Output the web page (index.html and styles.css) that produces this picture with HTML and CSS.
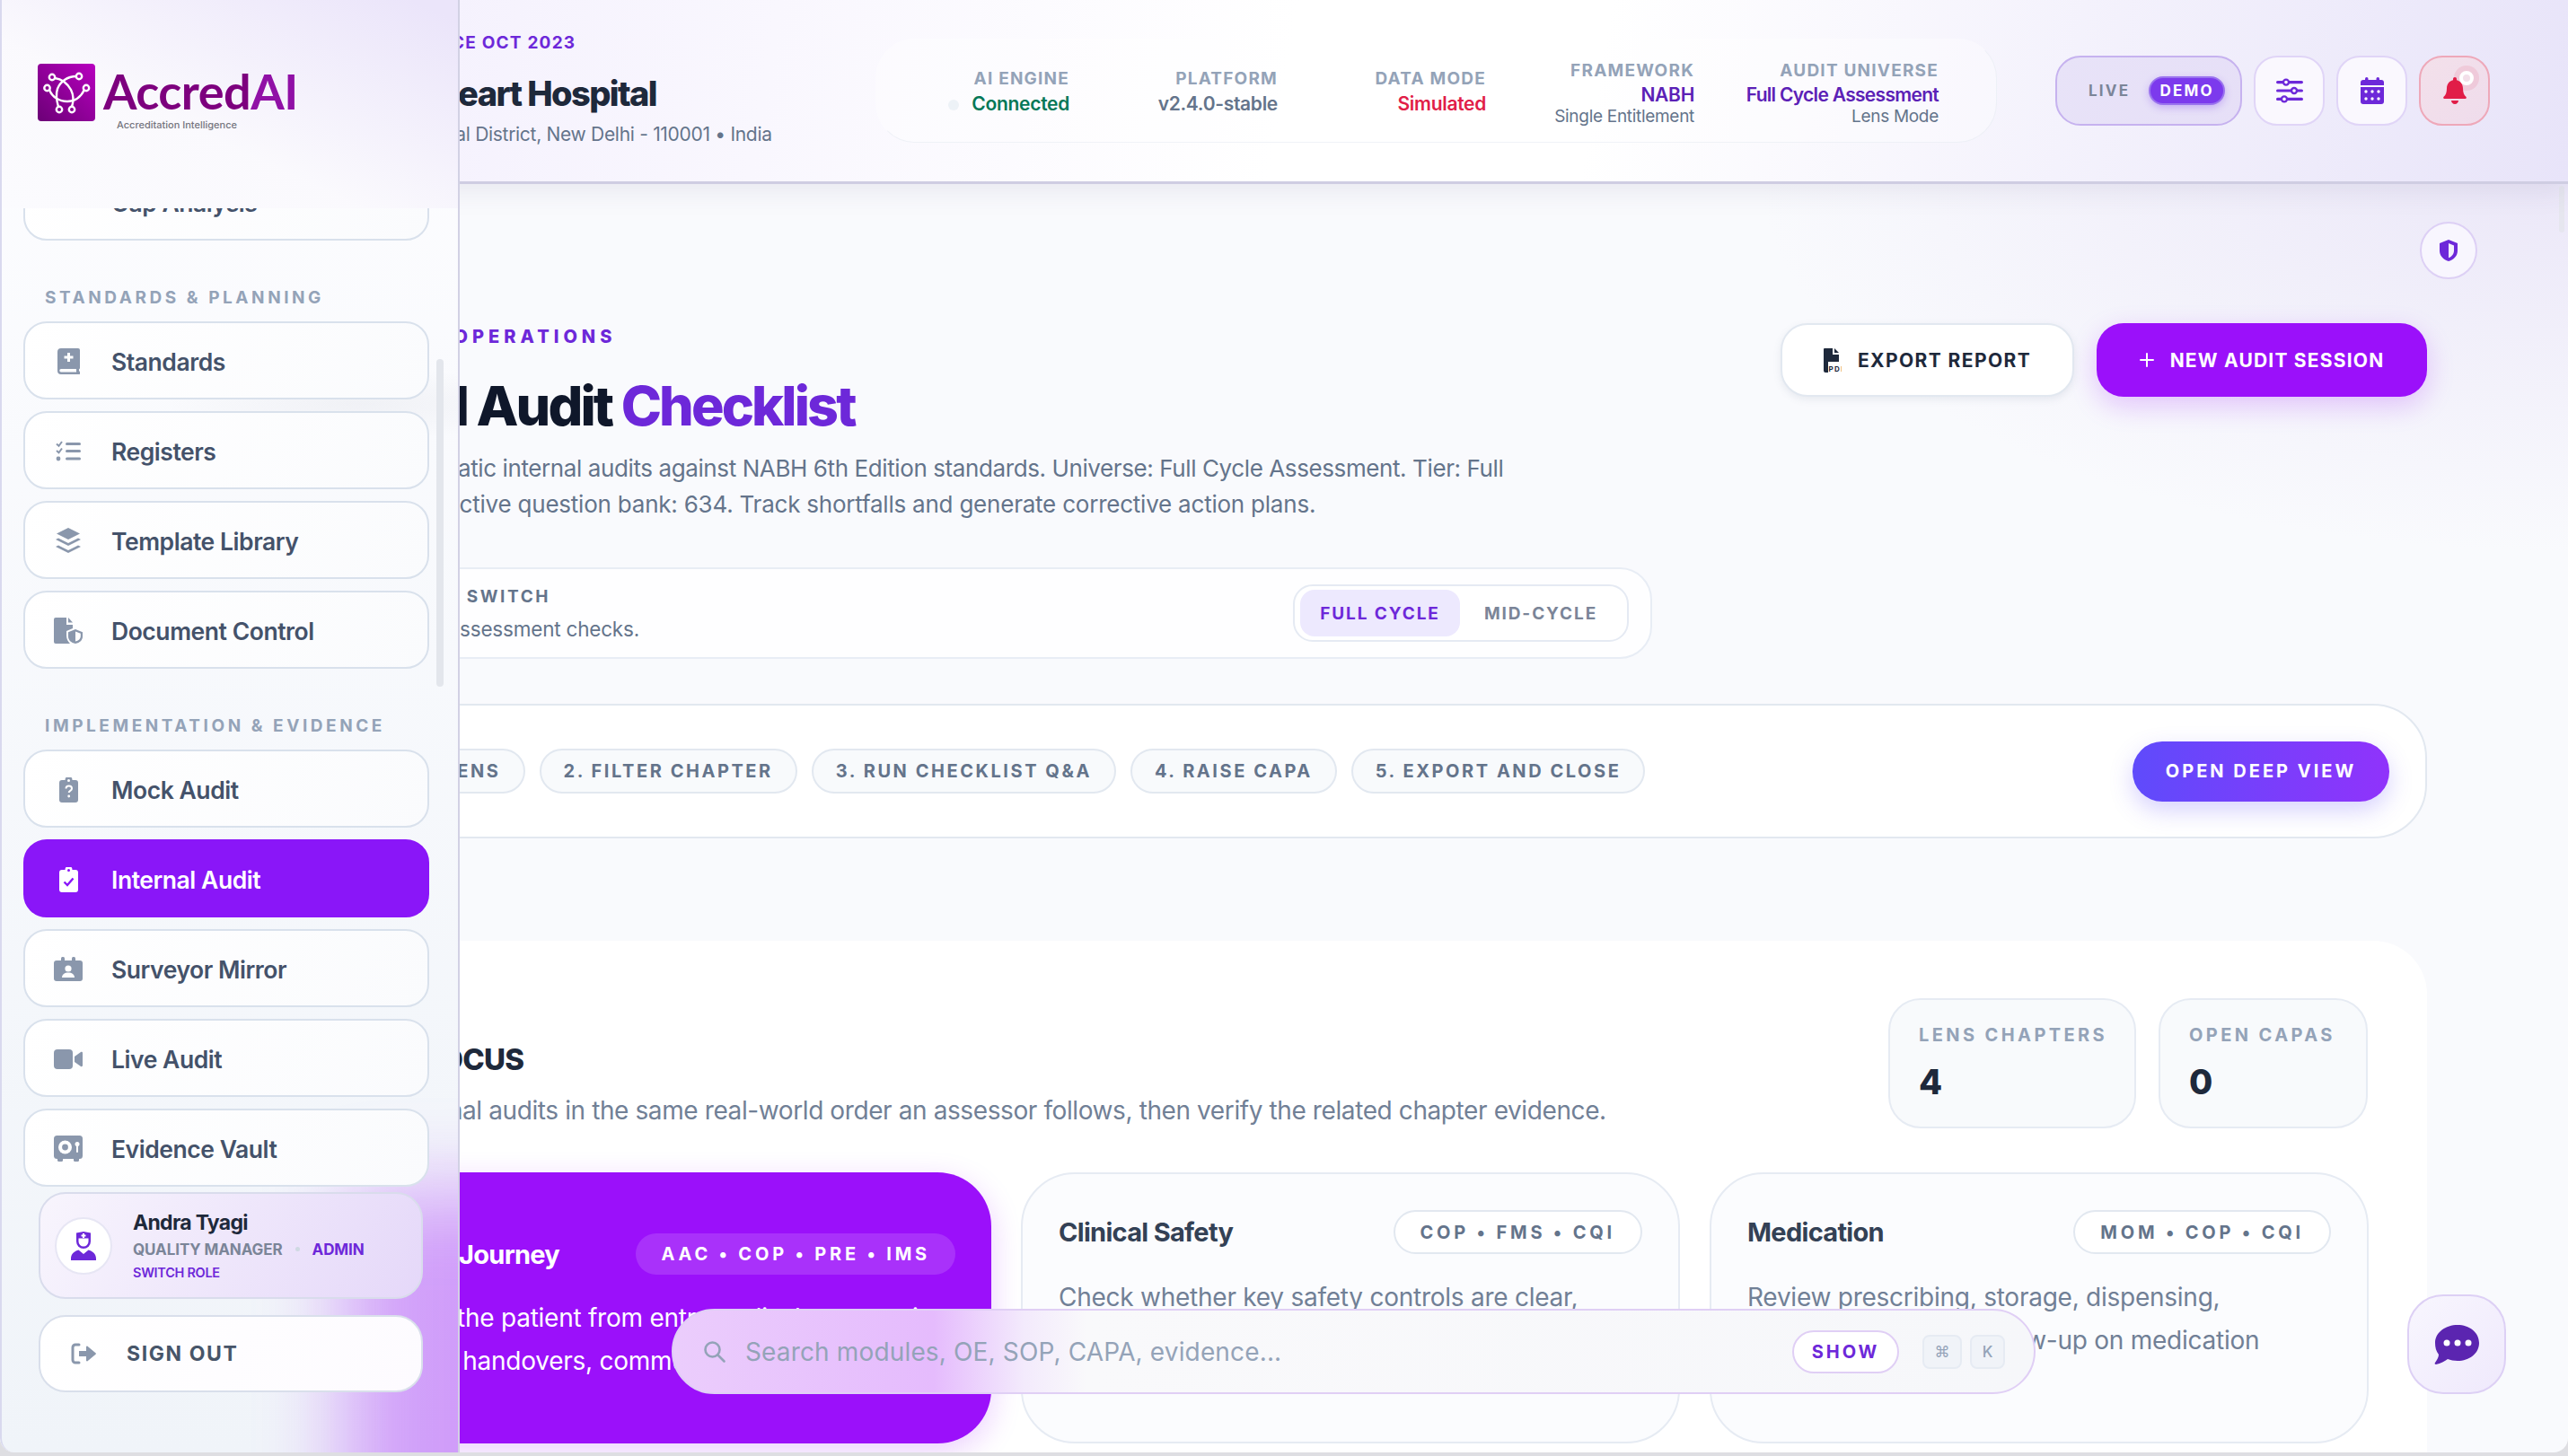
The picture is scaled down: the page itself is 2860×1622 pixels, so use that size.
FILE: index.html
```html
<!DOCTYPE html>
<html lang="en">
<head>
    <meta charset="UTF-8">
    <meta name="viewport" content="width=device-width, initial-scale=1.0">
    <title>AccredAI - Internal Audit Checklist</title>
    <link rel="stylesheet" href="styles.css">
</head>
<body>
<div class="app">

    <!-- main column, runs underneath the floating sidebar -->
    <main class="main">
        <header class="topbar">
            <div class="org">
                <div class="org-tag">ACCREDITED SINCE OCT 2023</div>
                <div class="org-name">City Heart Hospital</div>
                <div class="org-addr">Central District, New Delhi - 110001 &bull; India</div>
            </div>
            <div class="status-pill">
                <div class="stat stat-first">
                    <div class="stat-label">AI ENGINE</div>
                    <div class="stat-value green"><span class="dot"></span>Connected</div>
                </div>
                <div class="stat">
                    <div class="stat-label">PLATFORM</div>
                    <div class="stat-value">v2.4.0-stable</div>
                </div>
                <div class="stat">
                    <div class="stat-label">DATA MODE</div>
                    <div class="stat-value red">Simulated</div>
                </div>
                <div class="stat stat-three">
                    <div class="stat-label">FRAMEWORK</div>
                    <div class="stat-value violet">NABH</div>
                    <div class="stat-sub">Single Entitlement</div>
                </div>
                <div class="stat stat-three stat-wide">
                    <div class="stat-label">AUDIT UNIVERSE</div>
                    <div class="stat-value violet">Full Cycle Assessment</div>
                    <div class="stat-sub">Lens Mode</div>
                </div>
            </div>
            <div class="live-toggle">
                <span class="live-text">LIVE</span>
                <span class="demo-pill">DEMO</span>
            </div>
            <button class="icon-btn" type="button" aria-label="Filters">
                <svg width="30" height="28" viewBox="0 0 30 28" fill="#6d28d9"><rect x="0" y="3" width="30" height="3.2" rx="1.6"/><rect x="0" y="12.400" width="30" height="3.2" rx="1.6"/><rect x="0" y="21.800" width="30" height="3.2" rx="1.6"/><circle cx="11" cy="4.600" r="4.200"/><circle cx="20" cy="14" r="4.200"/><circle cx="9" cy="23.400" r="4.200"/><circle cx="11" cy="4.600" r="1.800" fill="#fff"/><circle cx="20" cy="14" r="1.800" fill="#fff"/><circle cx="9" cy="23.400" r="1.800" fill="#fff"/></svg>
            </button>
            <button class="icon-btn" type="button" aria-label="Calendar">
                <svg width="26" height="30" viewBox="0 0 26 30" fill="#6d28d9"><rect x="5" y="0" width="3.500" height="6" rx="1.700"/><rect x="17.500" y="0" width="3.500" height="6" rx="1.700"/><path d="M3 3h20a3 3 0 0 1 3 3v3H0V6a3 3 0 0 1 3-3z"/><path d="M0 11h26v16a3 3 0 0 1-3 3H3a3 3 0 0 1-3-3z"/><g fill="#fff"><circle cx="6" cy="16" r="1.700"/><circle cx="13" cy="16" r="1.700"/><circle cx="20" cy="16" r="1.700"/><circle cx="6" cy="24" r="1.700"/><circle cx="13" cy="24" r="1.700"/><circle cx="20" cy="24" r="1.700"/></g></svg>
            </button>
            <button class="icon-btn icon-btn-alert" type="button" aria-label="Notifications">
                <svg width="26" height="30" viewBox="0 0 26 30" fill="#e11d48"><path d="M13 0c1.200 0 2 .9 2 2v1.300c4.300.9 7 4.600 7 9.200 0 4.500 1.200 7.500 3.400 9.300.8.700.4 2.200-.8 2.200H1.400c-1.200 0-1.600-1.500-.8-2.200C2.800 20 4 17 4 12.500c0-4.600 2.700-8.300 7-9.200V2c0-1.100.8-2 2-2z"/><path d="M9 26h8c0 2.300-1.800 4-4 4s-4-1.700-4-4z"/></svg>
                <span class="bell-dot"></span>
            </button>
        </header>

        <div class="content">
            <button class="shield-btn" type="button" aria-label="Security">
                <svg width="20" height="24" viewBox="0 0 20 24"><path d="M10 0l10 4v8c0 6-4 10-10 12C4 22 0 18 0 12V4z" fill="#6d28d9"/><path d="M10 4l6 2.400V12c0 4-2.300 6.800-6 8.300z" fill="#f3effd"/></svg>
            </button>

            <section class="title-row">
                <div>
                    <div class="eyebrow">AUDIT OPERATIONS</div>
                    <h1 class="page-title">Internal Audit <span class="accent">Checklist</span></h1>
                    <p class="page-desc">Run systematic internal audits against NABH 6th Edition standards. Universe: Full Cycle Assessment. Tier: Full<br><span class="desc-second">Assurance. Active question bank: 634. Track shortfalls and generate corrective action plans.</span></p>
                </div>
                <div class="title-actions">
                    <button class="btn btn-light" type="button">
                        <svg width="20" height="27" viewBox="0 0 20 27"><path d="M1 0h9v7h7v8H5v12H2a2 2 0 0 1-2-2V1a1 1 0 0 1 1-1z" fill="#1e293b"/><path d="M12 0l5 5h-5z" fill="#1e293b"/><text x="5.500" y="26" font-size="8" font-weight="700" fill="#1e293b" font-family="Inter, sans-serif">PDF</text></svg>
                        EXPORT REPORT
                    </button>
                    <button class="btn btn-primary" type="button">
                        <svg width="16" height="16" viewBox="0 0 16 16" stroke="#fff" stroke-width="2" stroke-linecap="round"><path d="M8 1v14M1 8h14"/></svg>
                        NEW AUDIT SESSION
                    </button>
                </div>
            </section>

            <section class="switch-card">
                <div>
                    <div class="switch-title">AUDIT MODE SWITCH</div>
                    <div class="switch-sub">Choose depth of assessment checks.</div>
                </div>
                <div class="segment">
                    <span class="segment-item active">FULL CYCLE</span>
                    <span class="segment-item">MID-CYCLE</span>
                </div>
            </section>

            <section class="steps-card">
                <div class="steps">
                    <span class="chip">1. SELECT LENS</span>
                    <span class="chip">2. FILTER CHAPTER</span>
                    <span class="chip">3. RUN CHECKLIST Q&amp;A</span>
                    <span class="chip">4. RAISE CAPA</span>
                    <span class="chip">5. EXPORT AND CLOSE</span>
                </div>
                <button class="btn-deep" type="button">OPEN DEEP VIEW</button>
            </section>

            <section class="focus-card">
                <div class="focus-head">
                    <div>
                        <h2 class="focus-title">LENS FOCUS</h2>
                        <p class="focus-sub">Run internal audits in the same real-world order an assessor follows, then verify the related chapter evidence.</p>
                    </div>
                    <div class="focus-stats">
                        <div class="mini-stat mini-stat-wide">
                            <div class="mini-label">LENS CHAPTERS</div>
                            <div class="mini-value">4</div>
                        </div>
                        <div class="mini-stat">
                            <div class="mini-label">OPEN CAPAS</div>
                            <div class="mini-value">0</div>
                        </div>
                    </div>
                </div>
                <div class="lens-grid">
                    <article class="lens lens-active">
                        <div class="lens-top">
                            <h3>Patient Journey</h3>
                            <span class="lens-tag">AAC &bull; COP &bull; PRE &bull; IMS</span>
                        </div>
                        <p>Follow the patient from entry to discharge, review<br>clinical handovers, communication and consent.</p>
                    </article>
                    <article class="lens">
                        <div class="lens-top">
                            <h3>Clinical Safety</h3>
                            <span class="lens-tag">COP &bull; FMS &bull; CQI</span>
                        </div>
                        <p>Check whether key safety controls are clear,<br>monitored and followed at the point of care</p>
                    </article>
                    <article class="lens">
                        <div class="lens-top">
                            <h3>Medication</h3>
                            <span class="lens-tag">MOM &bull; COP &bull; CQI</span>
                        </div>
                        <p>Review prescribing, storage, dispensing,<br>administration, and follow-up on medication</p>
                    </article>
                </div>
            </section>
        </div>
        <div class="page-scroll"></div>
    </main>

    <!-- sidebar floats over the page -->
    <aside class="sidebar">
        <div class="brand">
            <svg class="brand-mark" width="64" height="64" viewBox="0 0 64 64">
                <defs><linearGradient id="markFill" x1="1" y1="0" x2="0" y2="1"><stop offset="0" stop-color="#b800bf"/><stop offset="1" stop-color="#6b0076"/></linearGradient></defs>
                <rect width="64" height="64" rx="4" fill="url(#markFill)"/>
                <g fill="none" stroke="#fff" stroke-width="2.400">
                    <path d="M19 16c8 1 14 6 18 13 3 6 3 13 1 19"/>
                    <path d="M43 14c-10 0-18 6-21 14-2 6-1 13 1 20"/>
                    <path d="M13 29c3 8 11 13 20 13 9 0 15-5 19-13"/>
                    <circle cx="16" cy="15" r="3.200"/><circle cx="46" cy="14" r="3.200"/><circle cx="10.500" cy="27" r="3.200"/><circle cx="54" cy="27" r="3.200"/><circle cx="24" cy="51" r="3.200"/><circle cx="38" cy="51" r="3.200"/>
                </g>
            </svg>
            <div class="brand-text">
                <div class="brand-name">Accred<span class="brand-ai">AI</span></div>
                <div class="brand-tag">Accreditation Intelligence</div>
            </div>
        </div>

        <nav class="side-nav">
            <a class="nav-item nav-first"><span class="nav-icon"><svg width="28" height="28" viewBox="0 0 28 28" fill="currentColor"><rect x="0" y="4" width="28" height="3" rx="1"/></svg></span>Gap Analysis</a>

            <div class="nav-label">STANDARDS &amp; PLANNING</div>
            <a class="nav-item"><span class="nav-icon"><svg width="25" height="29" viewBox="0 0 25 29" fill="currentColor" fill-rule="evenodd"><path d="M0 4a4 4 0 0 1 4-4h19a2 2 0 0 1 2 2v20a1.500 1.500 0 0 1-1 1.400v2.100a1.500 1.500 0 0 1 0 3.500H4a4 4 0 0 1-4-4zM11 5v3.500H7.500v3H11V15h3v-3.500h3.500v-3H14V5zM4 23a1.700 1.700 0 0 0 0 3.400h17V23z"/></svg></span>Standards</a>
            <a class="nav-item"><span class="nav-icon"><svg width="28" height="23" viewBox="0 0 28 23" fill="currentColor"><path d="M1 3.500l2.500 2.300L7 1M1 11l2.500 2.300L7 8.500" fill="none" stroke="currentColor" stroke-width="2"/><circle cx="3" cy="20" r="2.400"/><rect x="11" y="2" width="17" height="3" rx="1.500"/><rect x="11" y="10" width="17" height="3" rx="1.500"/><rect x="11" y="18.500" width="17" height="3" rx="1.500"/></svg></span>Registers</a>
            <a class="nav-item"><span class="nav-icon"><svg width="28" height="29" viewBox="0 0 28 29" fill="currentColor"><path d="M14 0l13 6.500-13 6.500L1 6.500z"/><path d="M0 13l3-1.500 11 5.500 11-5.500 3 1.500-14 7z"/><path d="M0 21l3-1.500 11 5.500 11-5.500 3 1.500-14 7z"/></svg></span>Template Library</a>
            <a class="nav-item"><span class="nav-icon"><svg width="32" height="29" viewBox="0 0 32 29" fill="currentColor"><path d="M0 2a2 2 0 0 1 2-2h12v8h7v4l-7 3v5c0 3.500 1.500 6.500 4 9H2a2 2 0 0 1-2-2z"/><path d="M16 0l5 5.500h-5z"/><path d="M24 13l8 3.200V21c0 4-3 7-8 8-5-1-8-4-8-8v-4.800z"/><path d="M24 15.500v11c3.500-1 5.800-3 5.800-5.600v-3.200z" fill="#fff"/></svg></span>Document Control</a>

            <div class="nav-label">IMPLEMENTATION &amp; EVIDENCE</div>
            <a class="nav-item"><span class="nav-icon"><svg width="21" height="28" viewBox="0 0 21 28"><path d="M3 3h3.500a4 4 0 0 1 8 0H18a3 3 0 0 1 3 3v19a3 3 0 0 1-3 3H3a3 3 0 0 1-3-3V6a3 3 0 0 1 3-3z" fill="currentColor"/><path d="M7.500 12.500c0-4 6.500-4 6.500 0 0 2.500-3.300 2.300-3.300 4.500" fill="none" stroke="#fff" stroke-width="2"/><circle cx="10.700" cy="21" r="1.400" fill="#fff"/><circle cx="10.500" cy="3.500" r="1.500" fill="#fff"/></svg></span>Mock Audit</a>
            <a class="nav-item active"><span class="nav-icon"><svg width="21" height="28" viewBox="0 0 21 28"><path d="M3 3h3.500a4 4 0 0 1 8 0H18a3 3 0 0 1 3 3v19a3 3 0 0 1-3 3H3a3 3 0 0 1-3-3V6a3 3 0 0 1 3-3z" fill="currentColor"/><path d="M5.500 16.500l3.500 3.500 6.500-7.500" fill="none" stroke="#8a16f8" stroke-width="2.400"/><circle cx="10.500" cy="3.500" r="1.500" fill="#8a16f8"/></svg></span>Internal Audit</a>
            <a class="nav-item"><span class="nav-icon"><svg width="32" height="27" viewBox="0 0 32 27" fill="currentColor"><rect x="0" y="4" width="32" height="23" rx="3"/><rect x="8" y="0" width="4" height="8" rx="1.500"/><rect x="20" y="0" width="4" height="8" rx="1.500"/><circle cx="16" cy="13" r="3.600" fill="#fff"/><path d="M9 23c0-3.500 3-5.500 7-5.500s7 2 7 5.500z" fill="#fff"/></svg></span>Surveyor Mirror</a>
            <a class="nav-item"><span class="nav-icon"><svg width="32" height="24" viewBox="0 0 32 24" fill="currentColor"><rect x="0" y="1" width="21" height="22" rx="4"/><path d="M23 9l7-5c.8-.5 2 0 2 1v14c0 1-1.200 1.500-2 1l-7-5z"/></svg></span>Live Audit</a>
            <a class="nav-item"><span class="nav-icon"><svg width="32" height="29" viewBox="0 0 32 29" fill="currentColor"><rect x="0" y="0" width="32" height="26" rx="3.500"/><rect x="4" y="24" width="6" height="5" rx="1.500"/><rect x="22" y="24" width="6" height="5" rx="1.500"/><circle cx="12.500" cy="13" r="7.500" fill="#fff"/><circle cx="12.500" cy="13" r="3.400"/><circle cx="26" cy="9.500" r="2.500" fill="#fff"/><rect x="25" y="10" width="2" height="9" rx="1" fill="#fff"/></svg></span>Evidence Vault</a>
        </nav>
        <div class="side-scroll"></div>

        <div class="side-foot">
            <div class="user-card">
                <div class="avatar">
                    <svg width="28" height="32" viewBox="0 0 28 32"><path d="M6 1.500L14 0l8 1.500V11a8 8 0 0 1-16 0z" fill="#6d28d9"/><path d="M8.500 7.500h11V11a5.500 5.500 0 0 1-11 0z" fill="#fff"/><path d="M13 2h2v1.500h1.500v2H15V7h-2V5.500h-1.500v-2H13z" fill="#fff"/><path d="M0 32v-2c0-5 4-8.500 8.500-9.500l5.500 4.500 5.500-4.500c4.500 1 8.500 4.500 8.500 9.500v2z" fill="#6d28d9"/></svg>
                </div>
                <div>
                    <div class="user-name">Andra Tyagi</div>
                    <div class="user-role">QUALITY MANAGER<span class="role-dot"></span><span class="role-admin">ADMIN</span></div>
                    <div class="user-switch">SWITCH ROLE</div>
                </div>
            </div>
            <button class="sign-out" type="button">
                <svg width="28" height="24" viewBox="0 0 28 24" fill="#8a97ac"><path d="M9 2H5a3 3 0 0 0-3 3v14a3 3 0 0 0 3 3h4" fill="none" stroke="#8a97ac" stroke-width="3" stroke-linecap="round"/><path d="M9 9h8V4.500c0-.8.900-1.200 1.500-.7l9 7.400c.5.400.5 1.200 0 1.600l-9 7.400c-.6.500-1.500.1-1.500-.7V15H9z"/></svg>
                SIGN OUT
            </button>
        </div>
    </aside>

    <!-- floating overlays -->
    <div class="search-bar">
        <svg width="26" height="26" viewBox="0 0 26 26" fill="none" stroke="#94a3b8" stroke-width="2.600" stroke-linecap="round"><circle cx="10.500" cy="10.500" r="8"/><path d="M16.500 16.500l7 7"/></svg>
        <span class="search-text">Search modules, OE, SOP, CAPA, evidence...</span>
        <button class="show-btn" type="button">SHOW</button>
        <span class="key key-cmd">&#8984;</span>
        <span class="key">K</span>
    </div>
    <button class="chat-btn" type="button" aria-label="Chat">
        <svg width="50" height="44" viewBox="0 0 50 44"><path d="M26 0c13 0 24 8 24 20S39 40 26 40c-4 0-8-1-11-2-3 2-8 5-13 6-1 0-2-1-1-2 2-3 4-6 4-9C2 29 1 25 1 20 1 8 13 0 26 0z" fill="#5b25b0"/><circle cx="14" cy="20" r="3.500" fill="#fff"/><circle cx="26" cy="20" r="3.500" fill="#fff"/><circle cx="38" cy="20" r="3.500" fill="#fff"/></svg>
    </button>
</div>
</body>
</html>
```

FILE: styles.css
```css
/* page frame */
html, body {
    height: 100%;
    margin: 0;
    overflow: hidden;
    background: #dedee2;
    font-family: Inter, "Noto Sans", sans-serif;
}
* {
    box-sizing: border-box;
}
button {
    font-family: inherit;
    cursor: pointer;
}
h1, h2, h3, p {
    margin: 0;
}
.app {
    position: relative;
    height: calc(100vh - 4px);
    overflow: hidden;
    border-radius: 0 0 16px 16px;
}

/* main column */
.main {
    height: 100%;
    display: flex;
    flex-direction: column;
    background: radial-gradient(900px 420px at 100% 12%, #ebe7f8, rgba(235, 231, 248, 0) 100%), #f9fafd;
}
.topbar {
    flex: none;
    height: 205px;
    display: flex;
    align-items: center;
    padding-right: 87px;
    background: linear-gradient(100deg, #f3effd 10%, #fff 50%, #fff 62%, #e8e4f9 100%);
    border-bottom: 3px solid #cfcde2;
    box-shadow: 0 6px 30px rgba(70, 60, 110, 0.1);
    position: relative;
    z-index: 1;
}
.org {
    align-self: flex-start;
    padding: 34px 0 0 304px;
    white-space: nowrap;
}
.org-tag {
    margin-left: 23px;
    font-size: 19px;
    line-height: 28px;
    font-weight: 700;
    letter-spacing: 1.2px;
    color: #6d28d9;
}
.org-name {
    margin-top: 17px;
    margin-left: 101px;
    font-size: 38px;
    line-height: 50px;
    font-weight: 800;
    letter-spacing: -1.6px;
    color: #1e293b;
}
.org-addr {
    margin-top: 6px;
    margin-left: 150px;
    font-size: 21px;
    line-height: 30px;
    letter-spacing: -0.3px;
    color: #64748b;
}
.status-pill {
    width: 1249px;
    height: 116px;
    margin-left: auto;
    margin-right: 65px;
    flex: none;
    display: flex;
    align-items: center;
    padding-left: 15px;
    border-radius: 44px;
    border: 1px solid rgba(226, 232, 240, 0.5);
    border-left-color: transparent;
    border-top-color: transparent;
    background: rgba(255, 255, 255, 0.35);
}
.stat {
    width: 232px;
    flex: none;
    padding-top: 3px;
    text-align: right;
    white-space: nowrap;
}
.stat-first {
    width: 200px;
}
.stat-wide {
    width: 272px;
}
.stat-three {
    padding-top: 6px;
}
.stat-label {
    font-size: 19px;
    line-height: 24px;
    font-weight: 700;
    letter-spacing: 1.2px;
    color: #94a3b8;
}
.stat-value {
    margin-top: 3px;
    font-size: 21px;
    line-height: 26px;
    font-weight: 600;
    letter-spacing: -0.3px;
    color: #64748b;
}
.stat-three .stat-value {
    margin-top: 2px;
}
.stat-sub {
    font-size: 19px;
    line-height: 22px;
    letter-spacing: -0.3px;
    color: #64748b;
}
.stat-wide .stat-value {
    letter-spacing: -0.7px;
}
.green { color: #047857; }
.red { color: #e11d48; }
.violet { color: #5b21b6; }
.dot {
    display: inline-block;
    width: 12px;
    height: 12px;
    margin-right: 14px;
    border-radius: 50%;
    background: #edf2f7;
}
.live-toggle {
    flex: none;
    width: 208px;
    height: 78px;
    display: flex;
    align-items: center;
    gap: 21px;
    padding-left: 35px;
    border-radius: 28px;
    border: 2px solid #c6b2ef;
    background: linear-gradient(120deg, #e8e3f8, #e6dff7);
}
.live-text {
    font-size: 17px;
    font-weight: 700;
    letter-spacing: 2.2px;
    color: #7b8598;
}
.demo-pill {
    width: 85px;
    height: 32px;
    display: flex;
    align-items: center;
    justify-content: center;
    border-radius: 16px;
    border: 2px solid #9a73ee;
    background: #7c3aed;
    box-shadow: 0 3px 8px rgba(124, 58, 237, 0.3);
    font-size: 17px;
    font-weight: 700;
    letter-spacing: 2.2px;
    color: #fff;
}
.icon-btn {
    position: relative;
    flex: none;
    width: 79px;
    height: 78px;
    margin-left: 13px;
    padding: 0;
    display: flex;
    align-items: center;
    justify-content: center;
    border-radius: 26px;
    border: 2px solid #e0d5f7;
    background: #faf8fe;
}
.icon-btn-alert {
    border-color: #eea8b9;
    background: linear-gradient(135deg, #f3e0ea, #efdcec);
}
.bell-dot {
    position: absolute;
    top: 15px;
    right: 16px;
    width: 16px;
    height: 16px;
    border-radius: 50%;
    background: #f3dfe9;
    border: 4px solid #fff;
    box-shadow: 0 0 0 6px rgba(225, 29, 72, 0.1);
}

/* scrolling content */
.content {
    position: relative;
    flex: 1;
    min-height: 0;
    overflow: hidden;
    padding: 155px 157px 0 304px;
}
.shield-btn {
    position: absolute;
    top: 42px;
    right: 101px;
    width: 64px;
    height: 64px;
    padding: 0;
    display: flex;
    align-items: center;
    justify-content: center;
    border-radius: 50%;
    border: 2px solid #ddd0f5;
    background: #f8f6fe;
}
.title-row {
    display: flex;
    justify-content: space-between;
    align-items: flex-start;
}
.title-actions {
    display: flex;
    gap: 25px;
}
.eyebrow {
    margin-left: 104px;
    font-size: 20px;
    line-height: 30px;
    font-weight: 800;
    letter-spacing: 5px;
    color: #6d28d9;
}
.page-title {
    margin-top: 24px;
    margin-left: 6px;
    font-size: 61px;
    line-height: 76px;
    font-weight: 800;
    letter-spacing: -2.9px;
    color: #0f172a;
}
.accent {
    color: #6d28d9;
}
.page-desc {
    margin-top: 12px;
    margin-left: 67px;
    font-size: 26px;
    line-height: 40px;
    letter-spacing: -0.4px;
    color: #64748b;
    white-space: nowrap;
}
.desc-second {
    margin-left: -20px;
    letter-spacing: -0.22px;
}
.btn {
    height: 82px;
    display: flex;
    align-items: center;
    justify-content: center;
    border-radius: 30px;
    font-size: 21px;
    font-weight: 700;
    letter-spacing: 1.4px;
    white-space: nowrap;
}
.btn-light {
    width: 327px;
    gap: 18px;
    border: 2px solid #e2e8f0;
    background: #fff;
    color: #1e293b;
    box-shadow: 0 3px 8px rgba(100, 116, 139, 0.12);
}
.btn-primary {
    width: 368px;
    gap: 18px;
    border: none;
    background: #9b10fa;
    color: #fff;
    letter-spacing: 1.2px;
    box-shadow: 0 10px 30px rgba(155, 16, 250, 0.22);
}
.switch-card {
    width: 1536px;
    height: 102px;
    margin-top: 50px;
    display: flex;
    align-items: center;
    justify-content: space-between;
    padding: 0 24px 0 13px;
    border-radius: 36px;
    border: 2px solid #e8edf5;
    background: #fefeff;
}
.switch-title {
    margin-left: 46px;
    font-size: 19px;
    line-height: 26px;
    font-weight: 700;
    letter-spacing: 2.6px;
    color: #64748b;
}
.switch-sub {
    margin-top: 10px;
    font-size: 22.5px;
    line-height: 26px;
    letter-spacing: -0.2px;
    color: #64748b;
    white-space: nowrap;
}
.segment {
    width: 374px;
    height: 64px;
    display: flex;
    align-items: center;
    padding: 0 6px;
    border-radius: 22px;
    border: 2px solid #e5eaf3;
    background: #fff;
}
.segment-item {
    flex: 1;
    height: 52px;
    display: flex;
    align-items: center;
    justify-content: center;
    border-radius: 16px;
    font-size: 19px;
    font-weight: 700;
    letter-spacing: 1.9px;
    color: #7b8598;
    white-space: nowrap;
}
.segment-item.active {
    flex: 0 0 178px;
    background: #ede9fe;
    color: #6d28d9;
}
.steps-card {
    height: 150px;
    margin-top: 50px;
    display: flex;
    align-items: center;
    justify-content: space-between;
    padding: 0 40px 0 36px;
    border-radius: 60px;
    border: 2px solid #e2e8f0;
    background: #fff;
}
.steps {
    display: flex;
    gap: 16px;
}
.chip {
    height: 50px;
    display: flex;
    align-items: center;
    padding: 0 25px;
    border-radius: 25px;
    border: 2px solid #e2e8f0;
    background: #f8fafc;
    font-size: 20px;
    font-weight: 700;
    letter-spacing: 2.55px;
    color: #64748b;
    white-space: nowrap;
}
.btn-deep {
    width: 286px;
    height: 67px;
    border: none;
    border-radius: 33px;
    background: linear-gradient(90deg, #5f4bfb, #9033fb);
    box-shadow: 0 10px 26px rgba(95, 75, 251, 0.25);
    font-size: 20px;
    font-weight: 700;
    letter-spacing: 3px;
    color: #fff;
}
.focus-card {
    height: 640px;
    margin-top: 114px;
    padding: 64px 66px 0 66px;
    border-radius: 60px;
    background: #fff;
}
.focus-head {
    display: flex;
    justify-content: space-between;
    align-items: flex-end;
    white-space: nowrap;
}
.focus-title {
    margin-left: 13px;
    padding-top: 2px;
    font-size: 33px;
    line-height: 40px;
    font-weight: 800;
    letter-spacing: -0.8px;
    color: #1e293b;
}
.focus-sub {
    margin-top: 17px;
    margin-left: 14px;
    font-size: 28px;
    line-height: 40px;
    letter-spacing: -0.4px;
    color: #718096;
}
.focus-stats {
    display: flex;
    gap: 25px;
}
.mini-stat {
    width: 233px;
    height: 145px;
    padding: 26px 32px;
    border-radius: 36px;
    border: 2px solid #e6ebf3;
    background: #f8fafc;
}
.mini-stat-wide {
    width: 276px;
}
.mini-label {
    font-size: 20px;
    line-height: 26px;
    font-weight: 700;
    letter-spacing: 3.4px;
    color: #94a3b8;
    white-space: nowrap;
}
.mini-value {
    margin-top: 15px;
    font-size: 38px;
    line-height: 48px;
    font-weight: 800;
    color: #1e293b;
}
.lens-grid {
    margin-top: 49px;
    display: grid;
    grid-template-columns: repeat(3, 734px);
    column-gap: 33px;
}
.lens {
    height: 302px;
    padding: 40px 40px;
    border-radius: 60px;
    border: 2px solid #e6ebf3;
    background: #fbfcfe;
    white-space: nowrap;
}
.lens-top {
    display: flex;
    align-items: center;
    justify-content: space-between;
}
.lens h3 {
    font-size: 29px;
    font-weight: 700;
    letter-spacing: -0.7px;
    color: #334155;
}
.lens-tag {
    height: 49px;
    display: flex;
    align-items: center;
    padding: 0 28px;
    border-radius: 25px;
    border: 2px solid #e2e8f0;
    background: #fff;
    font-size: 20px;
    font-weight: 700;
    letter-spacing: 3.8px;
    color: #64748b;
}
.lens p {
    margin-top: 24px;
    font-size: 28px;
    line-height: 48px;
    letter-spacing: -0.25px;
    color: #718096;
}
.lens-active {
    padding-top: 68px;
    border: none;
    background: #9b10fa;
    box-shadow: 0 10px 34px rgba(155, 16, 250, 0.2);
}
.lens-active h3,
.lens-active p {
    color: #fff;
}
.lens-active p {
    margin-left: 8px;
}
.lens-active .lens-tag {
    height: 46px;
    border: none;
    background: rgba(255, 255, 255, 0.14);
    color: #fff;
}
.page-scroll {
    position: absolute;
    top: 207px;
    right: 4px;
    width: 6px;
    height: 52px;
    border-radius: 3px;
    background: #e6e6ef;
}

/* sidebar */
.sidebar {
    position: absolute;
    top: 0;
    left: 0;
    bottom: 0;
    z-index: 3;
    width: 512px;
    display: flex;
    flex-direction: column;
    overflow: hidden;
    border-left: 2px solid #d9d9ee;
    border-right: 2px solid #d2d1e4;
    border-bottom-left-radius: 16px;
    background: radial-gradient(220px 40px at 400px 450px, rgba(90, 90, 120, 0.06), rgba(90, 90, 120, 0)), linear-gradient(180deg, #fdfdff, #f0f4f9);
}
/* tint of the purple card lying behind the sidebar */
.sidebar::before {
    content: "";
    position: absolute;
    left: 385px;
    top: 1330px;
    width: 280px;
    height: 420px;
    background: rgba(155, 16, 250, 0.38);
    filter: blur(48px);
}
.sidebar > * {
    position: relative;
}
.brand {
    flex: none;
    height: 232px;
    display: flex;
    align-items: flex-start;
    gap: 9px;
    padding: 71px 0 0 40px;
    background: linear-gradient(205deg, #ebe5fa 5%, rgba(250, 249, 253, 0.9) 60%, #fbfbfe 100%);
}
.brand-name {
    margin-top: 2px;
    font-family: Lato, Inter, sans-serif;
    font-size: 54px;
    line-height: 58px;
    font-weight: 700;
    letter-spacing: -0.5px;
    color: #7d007e;
}
.brand-ai {
    color: #9010a6;
}
.brand-tag {
    margin: 1px 0 0 15px;
    font-size: 11px;
    line-height: 14px;
    font-weight: 500;
    letter-spacing: 0;
    color: #75757d;
}
.side-nav {
    flex: 1;
    min-height: 0;
    overflow: hidden;
    padding: 0 32px 0 24px;
}
.nav-item {
    height: 87px;
    margin-bottom: 13px;
    display: flex;
    align-items: center;
    gap: 34px;
    padding: 2px 0 0 34px;
    border-radius: 26px;
    border: 2px solid #d9e1ec;
    background: linear-gradient(120deg, #fff, #fafbfd);
    font-size: 26.5px;
    font-weight: 600;
    letter-spacing: -0.45px;
    color: #44526a;
}
.nav-first {
    margin-top: -51px;
}
.nav-label {
    margin: 52px 0 14px 24px;
    font-size: 19px;
    line-height: 24px;
    font-weight: 700;
    letter-spacing: 3.55px;
    color: #94a3b8;
    white-space: nowrap;
}
.nav-icon {
    flex: 0 0 28px;
    width: 28px;
    min-width: 0;
    display: flex;
    align-items: center;
    justify-content: center;
    color: #8a97ac;
}
.nav-icon svg {
    flex: none;
}
.nav-item.active {
    border-color: #8a16f8;
    background: #8a16f8;
    color: #fff;
}
.nav-item.active .nav-icon {
    color: #fff;
}
.sidebar > .side-scroll {
    position: absolute;
    top: 400px;
    left: 484px;
    width: 8px;
    height: 365px;
    border-radius: 4px;
    background: #e3e6ec;
}
.side-foot {
    flex: none;
    padding: 4px 39px 67px 41px;
}
.user-card {
    height: 119px;
    display: flex;
    align-items: center;
    gap: 23px;
    padding-left: 16px;
    border-radius: 30px;
    border: 2px solid #d9dcec;
    background: linear-gradient(120deg, #f8f5fd, #e5d8f9);
}
.avatar {
    flex: none;
    width: 64px;
    height: 64px;
    display: flex;
    align-items: center;
    justify-content: center;
    border-radius: 50%;
    border: 2px solid #e7e6f4;
    background: #fff;
}
.user-name {
    font-size: 23px;
    line-height: 28px;
    font-weight: 700;
    letter-spacing: -0.7px;
    color: #1e293b;
}
.user-role {
    margin-top: 5px;
    display: flex;
    align-items: center;
    font-size: 17px;
    line-height: 22px;
    font-weight: 700;
    letter-spacing: -0.1px;
    color: #7b8598;
    white-space: nowrap;
}
.role-dot {
    width: 5px;
    height: 5px;
    margin: 0 14px;
    border-radius: 50%;
    background: #cfd9e2;
}
.role-admin {
    color: #6d28d9;
}
.user-switch {
    margin-top: 5px;
    font-size: 14.5px;
    line-height: 20px;
    font-weight: 600;
    letter-spacing: -0.3px;
    color: #6d28d9;
}
.sign-out {
    width: 100%;
    height: 86px;
    margin-top: 18px;
    display: flex;
    align-items: center;
    gap: 34px;
    padding: 0 0 0 34px;
    border-radius: 30px;
    border: 2px solid #d9dfeb;
    background: linear-gradient(120deg, #fff, #fdfbff);
    font-size: 23px;
    font-weight: 700;
    letter-spacing: 1.6px;
    color: #475569;
}

/* floating overlays */
.search-bar {
    position: absolute;
    left: 748px;
    top: 1458px;
    z-index: 4;
    width: 1519px;
    height: 95px;
    display: flex;
    align-items: center;
    padding: 0 32px 0 33px;
    border-radius: 48px;
    border: 2px solid #e0cff5;
    background: linear-gradient(90deg, #ebcdfc 0, #e5bbfd 290px, #f3eafc 390px, #f9f9fb 460px, #f6f7fa 100%);
}
.search-text {
    flex: 1;
    margin-left: 21px;
    font-size: 28px;
    letter-spacing: 0.15px;
    color: #94a3b8;
    white-space: nowrap;
}
.show-btn {
    width: 119px;
    height: 48px;
    margin-right: 26px;
    padding: 0;
    border-radius: 24px;
    border: 2px solid #e0cff5;
    background: #fff;
    font-size: 20px;
    font-weight: 700;
    letter-spacing: 3px;
    color: #6d28d9;
}
.key {
    width: 39px;
    height: 38px;
    margin-left: 9px;
    display: flex;
    align-items: center;
    justify-content: center;
    border-radius: 8px;
    border: 2px solid #e6ebf3;
    background: #f0f3f8;
    font-size: 17px;
    font-weight: 500;
    color: #94a3b8;
}
.key-cmd {
    width: 44px;
    margin-left: 0;
    font-family: "DejaVu Sans", sans-serif;
}
.chat-btn {
    position: absolute;
    left: 2681px;
    top: 1442px;
    z-index: 4;
    width: 110px;
    height: 111px;
    padding: 0;
    display: flex;
    align-items: center;
    justify-content: center;
    border-radius: 40px;
    border: 2px solid #ddd0f5;
    background: linear-gradient(135deg, #f8f6fe, #efe9fc);
}
```
